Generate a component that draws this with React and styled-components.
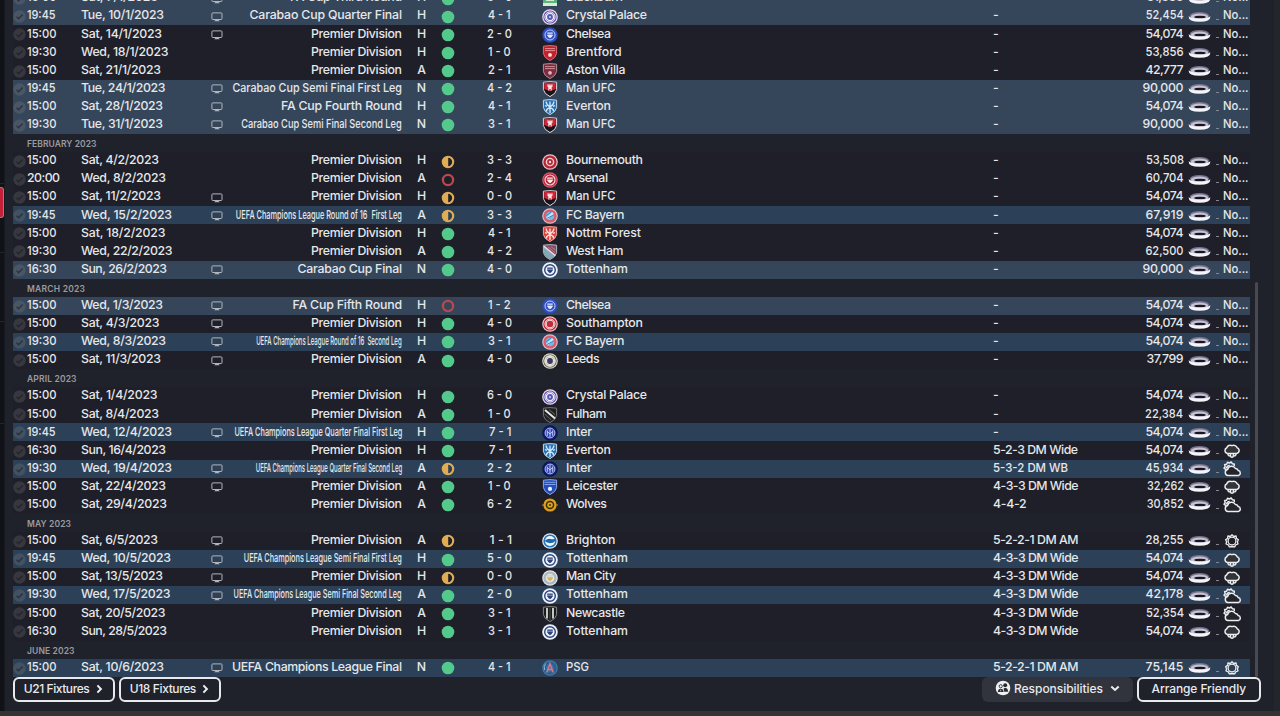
import React, { useLayoutEffect, useRef } from "react";
import styled, { createGlobalStyle } from "styled-components";

const GlobalStyle = createGlobalStyle`
  * {
    box-sizing: border-box;
  }
  body {
    margin: 0;
    overflow: hidden;
    background: #1f212b;
    font-family: Inter, "Liberation Sans", sans-serif;
  }
`;

// competition name -> text and width it has to fit in
const comps = {
  pl: ["Premier Division", 91],
  fa3: ["FA Cup Third Round", 112],
  fa4: ["FA Cup Fourth Round", 121],
  fa5: ["FA Cup Fifth Round", 109.5],
  ccq: ["Carabao Cup Quarter Final", 152.5],
  ccs1: ["Carabao Cup Semi Final First Leg", 169.5],
  ccs2: ["Carabao Cup Semi Final Second Leg", 160.5],
  ccf: ["Carabao Cup Final", 104.5],
  cl16a: ["UEFA Champions League Round of 16  First Leg", 166],
  cl16b: ["UEFA Champions League Round of 16  Second Leg", 145.5],
  clqa: ["UEFA Champions League Quarter Final First Leg", 168],
  clqb: ["UEFA Champions League Quarter Final Second Leg", 146.5],
  clsa: ["UEFA Champions League Semi Final First Leg", 158],
  clsb: ["UEFA Champions League Semi Final Second Leg", 168],
  clf: ["UEFA Champions League Final", 170],
};

const nameWidths = {
  Blackburn: 57,
  "Crystal Palace": 81,
  Chelsea: 45,
  Brentford: 55.5,
  "Aston Villa": 59.5,
  "Man UFC": 49.5,
  Everton: 45,
  Bournemouth: 77,
  Arsenal: 42,
  "FC Bayern": 58.5,
  "Nottm Forest": 75,
  "West Ham": 57.5,
  Tottenham: 62,
  Southampton: 77,
  Leeds: 33.5,
  Fulham: 40.5,
  Inter: 26,
  Leicester: 52,
  Wolves: 41,
  Brighton: 49.5,
  "Man City": 50,
  Newcastle: 59,
  PSG: 23,
};

// time, date, date width, tv, competition, venue, result, score, club, attendance, tactic, weather
const months = [
  {
    rows: [
      ["15:00", "Sat, 7/1/2023", 77, 1, "fa3", "H", "w", "3 - 0", "Blackburn", "31,363"],
      ["19:45", "Tue, 10/1/2023", 83, 1, "ccq", "H", "w", "4 - 1", "Crystal Palace", "52,454"],
      ["15:00", "Sat, 14/1/2023", 81, 1, "pl", "H", "w", "2 - 0", "Chelsea", "54,074"],
      ["19:30", "Wed, 18/1/2023", 87.5, 0, "pl", "H", "w", "1 - 0", "Brentford", "53,856"],
      ["15:00", "Sat, 21/1/2023", 80, 0, "pl", "A", "w", "2 - 1", "Aston Villa", "42,777"],
      ["19:45", "Tue, 24/1/2023", 84.5, 1, "ccs1", "N", "w", "4 - 2", "Man UFC", "90,000"],
      ["15:00", "Sat, 28/1/2023", 82, 1, "fa4", "H", "w", "4 - 1", "Everton", "54,074"],
      ["19:30", "Tue, 31/1/2023", 82, 1, "ccs2", "N", "w", "3 - 1", "Man UFC", "90,000"],
    ],
  },
  {
    title: "FEBRUARY 2023",
    width: 69.5,
    rows: [
      ["15:00", "Sat, 4/2/2023", 78, 0, "pl", "H", "d", "3 - 3", "Bournemouth", "53,508"],
      ["20:00", "Wed, 8/2/2023", 85, 0, "pl", "A", "l", "2 - 4", "Arsenal", "60,704"],
      ["15:00", "Sat, 11/2/2023", 80, 1, "pl", "H", "d", "0 - 0", "Man UFC", "54,074"],
      ["19:45", "Wed, 15/2/2023", 91, 1, "cl16a", "A", "d", "3 - 3", "FC Bayern", "67,919"],
      ["15:00", "Sat, 18/2/2023", 84.5, 0, "pl", "H", "w", "4 - 1", "Nottm Forest", "54,074"],
      ["19:30", "Wed, 22/2/2023", 91.5, 0, "pl", "A", "w", "4 - 2", "West Ham", "62,500"],
      ["16:30", "Sun, 26/2/2023", 86, 1, "ccf", "N", "w", "4 - 0", "Tottenham", "90,000"],
    ],
  },
  {
    title: "MARCH 2023",
    width: 58,
    rows: [
      ["15:00", "Wed, 1/3/2023", 82, 1, "fa5", "H", "l", "1 - 2", "Chelsea", "54,074"],
      ["15:00", "Sat, 4/3/2023", 78.5, 1, "pl", "H", "w", "4 - 0", "Southampton", "54,074"],
      ["19:30", "Wed, 8/3/2023", 85, 1, "cl16b", "H", "w", "3 - 1", "FC Bayern", "54,074"],
      ["15:00", "Sat, 11/3/2023", 80, 1, "pl", "A", "w", "4 - 0", "Leeds", "37,799"],
    ],
  },
  {
    title: "APRIL 2023",
    width: 49.5,
    rows: [
      ["15:00", "Sat, 1/4/2023", 76.5, 0, "pl", "H", "w", "6 - 0", "Crystal Palace", "54,074"],
      ["15:00", "Sat, 8/4/2023", 78, 0, "pl", "A", "w", "1 - 0", "Fulham", "22,384"],
      ["19:45", "Wed, 12/4/2023", 91, 1, "clqa", "H", "w", "7 - 1", "Inter", "54,074"],
      ["16:30", "Sun, 16/4/2023", 85, 0, "pl", "H", "w", "7 - 1", "Everton", "54,074", "5-2-3 DM Wide", "rain"],
      ["19:30", "Wed, 19/4/2023", 91, 1, "clqb", "A", "d", "2 - 2", "Inter", "45,934", "5-3-2 DM WB", "cloud"],
      ["15:00", "Sat, 22/4/2023", 85, 1, "pl", "A", "w", "1 - 0", "Leicester", "32,262", "4-3-3 DM Wide", "rain"],
      ["15:00", "Sat, 29/4/2023", 86, 0, "pl", "A", "w", "6 - 2", "Wolves", "30,852", "4-4-2", "cloud"],
    ],
  },
  {
    title: "MAY 2023",
    width: 44,
    rows: [
      ["15:00", "Sat, 6/5/2023", 77, 1, "pl", "A", "d", "1 - 1", "Brighton", "28,255", "5-2-2-1 DM AM", "sun"],
      ["19:45", "Wed, 10/5/2023", 90, 1, "clsa", "H", "w", "5 - 0", "Tottenham", "54,074", "4-3-3 DM Wide", "rain"],
      ["15:00", "Sat, 13/5/2023", 82, 1, "pl", "H", "d", "0 - 0", "Man City", "54,074", "4-3-3 DM Wide", "rain"],
      ["19:30", "Wed, 17/5/2023", 89.5, 1, "clsb", "A", "w", "2 - 0", "Tottenham", "42,178", "4-3-3 DM Wide", "cloud"],
      ["15:00", "Sat, 20/5/2023", 84.5, 0, "pl", "A", "w", "3 - 1", "Newcastle", "52,354", "4-3-3 DM Wide", "cloud"],
      ["16:30", "Sun, 28/5/2023", 86, 0, "pl", "H", "w", "3 - 1", "Tottenham", "54,074", "4-3-3 DM Wide", "rain"],
    ],
  },
  {
    title: "JUNE 2023",
    width: 47.5,
    rows: [
      ["15:00", "Sat, 10/6/2023", 83, 1, "clf", "N", "w", "4 - 1", "PSG", "75,145", "5-2-2-1 DM AM", "sun"],
    ],
  },
];

const tacticWidths = {
  "5-2-3 DM Wide": 85,
  "5-3-2 DM WB": 75,
  "4-3-3 DM Wide": 85.5,
  "4-4-2": 33.5,
  "5-2-2-1 DM AM": 85.5,
};

// Tracks text in or out to reach its width, condenses it when it is far too long
function Fit({ width, right, children }) {
  const ref = useRef(null);
  useLayoutEffect(() => {
    const el = ref.current;
    el.style.letterSpacing = "0px";
    el.style.transform = "none";
    const natural = el.getBoundingClientRect().width;
    if (width / natural < 0.93) {
      el.style.transform = `scaleX(${width / natural})`;
    } else {
      const space = (width - natural) / (children.length - 1);
      el.style.letterSpacing = `${space}px`;
      el.style.marginRight = `${-space}px`;
    }
  }, [width, children]);
  return (
    <FitText ref={ref} $right={right}>
      {children}
    </FitText>
  );
}

function Check() {
  return (
    <svg width="13" height="13" viewBox="0 0 13 13">
      <circle cx="6.5" cy="6.5" r="6.2" fill="#8b8b8b" fillOpacity="0.24" />
      <path d="M3.6 6.8l2 1.9 4-4.2" fill="none" stroke="#14161d" strokeOpacity="0.55" strokeWidth="1.4" />
    </svg>
  );
}

function Tv() {
  return (
    <svg width="12" height="10" viewBox="0 0 12 10">
      <rect x="0.9" y="0.9" width="10.1" height="6.6" rx="0.8" fill="none" stroke="#b2b5ba" strokeWidth="1" />
      <path d="M3.2 9.3L4.4 8h3.2l1.2 1.3z" fill="#b2b5ba" />
    </svg>
  );
}

function Result({ type }) {
  return (
    <svg width="14" height="14" viewBox="0 0 14 14">
      {type === "w" && <circle cx="7" cy="7" r="6.3" fill="#53ca8c" />}
      {type === "d" && (
        <>
          <circle cx="7" cy="7" r="5.2" fill="none" stroke="#e0ad55" strokeWidth="2.1" />
          <path d="M7.2 1.8a5.2 5.2 0 0 0 0 10.4z" fill="#e0ad55" />
        </>
      )}
      {type === "l" && <circle cx="7" cy="7" r="5.1" fill="none" stroke="#b9484f" strokeWidth="2.3" />}
    </svg>
  );
}

const shield = "M1.4 1.2Q8 0 14.6 1.2V8.6Q14 12.8 8 15.6 2 12.8 1.4 8.6z";

function Round({ edge, ring, core, children }) {
  return (
    <>
      <circle cx="8" cy="8" r="7.8" fill={edge} />
      <circle cx="8" cy="8" r="6.6" fill={ring} />
      <circle cx="8" cy="8" r="4.3" fill={core} />
      {children}
    </>
  );
}

function Shield({ edge, fill, children }) {
  return (
    <>
      <path d={shield} fill={fill} stroke={edge} strokeWidth="1" />
      {children}
    </>
  );
}

const star = "M8 2.5v11.5M4 2.500Q4.500 6 8 8q3.500-2 4-5.500M4 12.500Q5 9.500 8 8q3 1.500 4 4.500M3 6.500l2 .8M13 6.500l-2 .8";
const badge = "M5.3 5.6h5.4v2.6q-.7 2.2-2.7 3.1-2-.9-2.7-3.1z";

const crests = {
  Blackburn: (
    <>
      <path d="M1 2h14v13H1z" fill="#57b77b" />
      <path d="M1 12h14v3H1zM4 4h8v6H4z" fill="#d9ead9" />
    </>
  ),
  "Crystal Palace": (
    <Round edge="#eddcec" ring="#6352ae" core="#eeeefa">
      <circle cx="8" cy="8" r="5.1" fill="none" stroke="#eceaf8" strokeWidth="1" />
      <circle cx="8" cy="8" r="2.9" fill="#5559b3" />
      <circle cx="8" cy="8" r="1" fill="#d5d7f2" />
    </Round>
  ),
  Chelsea: (
    <Round edge="#2d49b8" ring="#3554c7" core="#3452ba">
      <circle cx="8" cy="8" r="5" fill="none" stroke="#b8c8ff" strokeWidth="1" />
      <path d={badge} fill="#e2eaff" />
      <path d="M5 7.200h6" stroke="#3452ba" strokeWidth="0.800" />
    </Round>
  ),
  Brentford: (
    <Shield edge="#e26c73" fill="#c3202d">
      <path d="M3 3.6h10M3 5.6h10" stroke="#efa4a8" strokeWidth="0.8" />
      <circle cx="8" cy="9.9" r="1.9" fill="#ffe6e4" />
    </Shield>
  ),
  "Aston Villa": (
    <Shield edge="#b09097" fill="#7d2b42">
      <path d="M3 3.6h10M3 5.6h10" stroke="#cf8c92" strokeWidth="1" />
      <circle cx="8" cy="9.8" r="1.9" fill="#ddb7b9" />
    </Shield>
  ),
  "Man UFC": (
    <Shield edge="#e2d8da" fill="#17131a">
      <path d="M2.2 2q5.8-1 11.6 0v6L8 10.2 2.2 8z" fill="#d02438" />
      <path d="M5.5 3.200h1.100v1h.9v-1h1v1h.9v-1h1.100v2.500l-.8.600v3.200H8.700V8H7.300v1.500H6.300V6.300l-.8-.6z" fill="#f1e7e3" />
    </Shield>
  ),
  Everton: (
    <Shield edge="#b9daf5" fill="#2b70ad">
      <path d={star} fill="none" stroke="#d4ecff" strokeWidth="1.3" />
    </Shield>
  ),
  Bournemouth: (
    <Round edge="#e9c6c8" ring="#b52536" core="#ecd2d0">
      <circle cx="8" cy="8" r="2.9" fill="#b5263a" />
      <circle cx="8" cy="8" r="1.2" fill="#f2dfdc" />
    </Round>
  ),
  Arsenal: (
    <Round edge="#d85b6b" ring="#b81f37" core="#b8263b">
      <circle cx="8" cy="8" r="5" fill="none" stroke="#f2d4d6" strokeWidth="1.200" />
      <path d={badge} fill="#fbeceb" />
      <path d="M5.500 7.200h5" stroke="#b8263b" strokeWidth="0.800" />
    </Round>
  ),
  "FC Bayern": (
    <Round edge="#e4b9c3" ring="#d85b6c" core="#78b8e5">
      <path d="M4.2 9.8L10 4l1.7 1.5-5.8 6z" fill="#cbe4f4" />
      <path d="M5 10.4l6.6-3.3M4.2 7.7L9.3 4" stroke="#3387cc" strokeWidth="1" />
    </Round>
  ),
  "Nottm Forest": (
    <Shield edge="#f2a6a0" fill="#d9433f">
      <path d={star} fill="none" stroke="#ffe5de" strokeWidth="1.3" />
    </Shield>
  ),
  "West Ham": (
    <Shield edge="#a9b9c2" fill="#8c4961">
      <path d="M2 3l10.8 9.4L8 15.1Q2.4 12.3 2 8.6z" fill="#7fa9b6" />
      <path d="M2 2.4l11.2 9.2" stroke="#e4dfe5" strokeWidth="1.5" />
      <path d="M6 3l7 5.500M9 2.800l4.500 3.200" stroke="#b98a9b" strokeWidth="0.800" />
    </Shield>
  ),
  Tottenham: (
    <Round edge="#e9effb" ring="#f2f5ff" core="#f2f5ff">
      <circle cx="8" cy="8" r="5.300" fill="none" stroke="#2c437b" strokeWidth="1.400" />
      <path d={badge} fill="#2c437b" />
      <path d="M5.6 7.2h4.8" stroke="#e7eefc" strokeWidth="0.6" />
    </Round>
  ),
  Southampton: (
    <Round edge="#f0c5c5" ring="#c4283a" core="#f5e7e2">
      <circle cx="8" cy="8" r="5" fill="none" stroke="#f5e7e2" strokeWidth="1" />
      <circle cx="8" cy="8" r="3.300" fill="#c22d3e" />
    </Round>
  ),
  Leeds: (
    <Round edge="#d9d7c4" ring="#4b4954" core="#e4e1cc">
      <circle cx="8" cy="8" r="5" fill="none" stroke="#e4e1cc" strokeWidth="1.8" />
      <circle cx="8" cy="8" r="2.900" fill="#3c396b" />
    </Round>
  ),
  Fulham: (
    <Shield edge="#77777a" fill="#202023">
      <path d="M3 3l10 8.5" stroke="#e5e5e4" strokeWidth="2" />
      <path d="M7 2.6l6 5M2.6 7l6.6 6" stroke="#7a7a7b" strokeWidth="0.8" />
    </Shield>
  ),
  Inter: (
    <Round edge="#0c1551" ring="#101e71" core="#3146b0">
      <circle cx="8" cy="8" r="4.9" fill="none" stroke="#bcc8ff" strokeWidth="1" />
      <path d="M5.3 10.8V5.6M10.7 10.8V5.6M8 4v8M5.4 6.6L8 9l2.6-2.4" fill="none" stroke="#ccd6ff" strokeWidth="0.9" />
    </Round>
  ),
  Leicester: (
    <Shield edge="#87a8ed" fill="#254ebc">
      <path d="M2.5 3.3h11M2.5 5.5h11" stroke="#98b5f7" strokeWidth="0.8" />
      <circle cx="8" cy="9.9" r="2.1" fill="#eaf1ff" />
    </Shield>
  ),
  Wolves: (
    <Round edge="#2a2014" ring="#dca01f" core="#3c2b10">
      <path d="M0 8h2M14 8h2" stroke="#c38a1c" strokeWidth="1.2" />
      <circle cx="8" cy="8" r="2.8" fill="#e0a51e" />
      <circle cx="8" cy="8" r="1.1" fill="#4a3512" />
    </Round>
  ),
  Brighton: (
    <Round edge="#d9edfa" ring="#2b76b9" core="#f0f7fb">
      <circle cx="8" cy="8" r="5" fill="#f0f7fb" />
      <path d="M2.500 8q3.500-3.200 7.500-1.700L13.500 6q-.4 4-4.500 4.100Q5.500 10.500 2.500 8z" fill="#1d68ac" />
    </Round>
  ),
  "Man City": (
    <Round edge="#e1e5e6" ring="#a8b8c6" core="#ebe6cf">
      <path d={badge} fill="#d8b457" />
      <path d="M5.2 5.300h5.600v2H5.200z" fill="#d3dbe0" />
    </Round>
  ),
  Newcastle: (
    <Shield edge="#8a8a89" fill="#191a1c">
      <path d="M5 2v10.500M11 2v10.500" stroke="#e4e3dd" strokeWidth="1.700" />
      <path d="M8 2v12" stroke="#77777a" strokeWidth="0.600" />
    </Shield>
  ),
  PSG: (
    <Round edge="#3d7da6" ring="#2b5e94" core="#386fa0">
      <path d="M4.800 12.500L8 3.600l3.200 8.900M6 9.600h4" fill="none" stroke="#dd7684" strokeWidth="1.500" />
      <path d="M3.500 3.600Q1.600 6.500 2.600 10" fill="none" stroke="#8dc0da" strokeWidth="0.900" />
    </Round>
  ),
};

function Stadium() {
  return (
    <svg width="23" height="12" viewBox="0 0 23 12">
      <ellipse cx="11.500" cy="4.500" rx="9.600" ry="3.600" fill="#777389" />
      <ellipse cx="11.500" cy="5.500" rx="8.800" ry="3" fill="#c6c1d6" />
      <ellipse cx="12" cy="6" rx="5.800" ry="1.300" fill="#17171d" />
      <path d="M.6 5.200Q3.500 7.500 11.500 7.500t10.900-2.300Q22.600 10.800 11.500 10.800T.6 5.200z" fill="#f5f4fb" />
    </svg>
  );
}

const cloud = "M4.300 10.500a3 3 0 0 1-.5-5.700A3.500 3.500 0 0 1 9 2.700a3.700 3.700 0 0 1 5.200 2.200 2.900 2.900 0 0 1-.5 5.600z";

function Weather({ type }) {
  return (
    <svg width="19" height="16" viewBox="0 0 19 16">
      {type === "rain" && (
        <g stroke="#ecedee" strokeWidth="1.500" strokeLinejoin="round">
          <path d={cloud} fill="#33343a" />
          <path d="M5 10.500v1q.2 1.400 1.300 1.400t1.200-1.400v1.400q.2 1.400 1.500 1.400t1.400-1.400v-1.400q.2 1.400 1.300 1.400t1.200-1.400v-1" fill="none" />
        </g>
      )}
      {type === "cloud" && (
        <g stroke="#ecedee" strokeWidth="1.500" strokeLinejoin="round">
          <path d="M2.600 10.200l.1-1.800L1 7.200l1.200-1.500L1.600 3.600l2-.4L4.500 1.300l1.900.7 1.800-1 1.100 1.700 1.900.3.100 2" fill="none" />
          <path d="M3.600 7.500q.2-3 3.200-3" fill="none" />
          <path d="M5 14.500a3 3 0 0 1-.4-5.900 4.200 4.200 0 0 1 7.800-1.100 2.800 2.800 0 0 1 2.800 2.100 2.500 2.500 0 0 1 .2 4.900z" fill="#24252c" />
        </g>
      )}
      {type === "sun" && (
        <g fill="none" stroke="#ecedee" strokeLinejoin="round">
          <circle cx="9" cy="8" r="3.900" strokeWidth="1.300" />
          <path
            d="M9 1.700l1.700 1.700 2.400-.4.300 2.400 2 1.300-1 2.100.6 2.200-2.300.8-1 2.100L9 13.500l-2.700.4-1-2.100-2.300-.8.600-2.200-1-2.100 2-1.300.3-2.400 2.400.4z"
            strokeWidth="1.300"
          />
        </g>
      )}
    </svg>
  );
}

function Fixture({ data }) {
  const [time, date, dateWidth, tv, comp, venue, result, score, club, crowd, tactic, weather] = data;
  const [compName, compWidth] = comps[comp];
  let tint = "none";
  if (comp !== "pl") tint = comp.startsWith("cl") ? "europe" : "cup";
  return (
    <Row $tint={tint}>
      <Cell $drop>
        <Check />
      </Cell>
      <Cell>
        <Fit width={time === "20:00" ? 33 : time === "19:45" ? 28.5 : 29.5}>{time}</Fit>
      </Cell>
      <Cell>
        <Fit width={dateWidth}>{date}</Fit>
      </Cell>
      <Cell $align="center" $drop>
        {tv ? <Tv /> : null}
      </Cell>
      <Cell $align="flex-end">
        <Fit width={compWidth} right>
          {compName}
        </Fit>
      </Cell>
      <Cell $align="center">{venue}</Cell>
      <Cell $align="center" $drop>
        <Result type={result} />
      </Cell>
      <Score>
        <Fit width={score.includes("1") ? 22.5 : 25}>{score}</Fit>
      </Score>
      <Cell $align="center" $drop>
        <svg width="16" height="16" viewBox="0 0 16 16">
          {crests[club]}
        </svg>
      </Cell>
      <Club>
        <Fit width={nameWidths[club]}>{club}</Fit>
      </Club>
      <Cell>{tactic ? <Fit width={tacticWidths[tactic]}>{tactic}</Fit> : "-"}</Cell>
      <Cell $align="flex-end">
        <Fit width={crowd === "90,000" ? 41 : crowd.startsWith("3") ? 37 : 38} right>
          {crowd}
        </Fit>
      </Cell>
      <Cell $align="center" $drop>
        <Stadium />
      </Cell>
      <Dash />
      <Cell $drop={Boolean(weather)}>{weather ? <Weather type={weather} /> : <Fit width={25.5}>No...</Fit>}</Cell>
    </Row>
  );
}

function App() {
  return (
    <>
      <GlobalStyle />
      <Screen>
        <Edge>
          <EdgeLine $top={183} />
          <Marker />
          <EdgeLine $top={34} />
          <EdgeLine $top={68} />
          <EdgeLine $top={101} />
        </Edge>
        <Panel>
          <Viewport>
            <List>
              {months.map((month, i) => (
                <React.Fragment key={i}>
                  {month.title && (
                    <Month>
                      <Fit width={month.width}>{month.title}</Fit>
                    </Month>
                  )}
                  {month.rows.map((row) => (
                    <Fixture key={row[1]} data={row} />
                  ))}
                </React.Fragment>
              ))}
            </List>
            <Scrollbar />
          </Viewport>
          <Footer>
            <Button $width={102.5}>
              <Fit width={66}>U21 Fixtures</Fit>
              <Chevron />
            </Button>
            <Button $width={102.5}>
              <Fit width={66.5}>U18 Fixtures</Fit>
              <Chevron />
            </Button>
            <Spacer />
            <Responsibilities>
              <People />
              <Fit width={89}>Responsibilities</Fit>
              <Chevron down />
            </Responsibilities>
            <Button $width={124}>
              <Fit width={94.5}>Arrange Friendly</Fit>
            </Button>
          </Footer>
        </Panel>
        <RightEdge />
      </Screen>
      <BottomStrip />
    </>
  );
}

function Chevron({ down }) {
  return (
    <svg width="10" height="10" viewBox="0 0 10 10">
      <path
        d={down ? "M1.300 3.500L5 6.900l3.700-3.400" : "M3.400 1.400L6.900 5 3.400 8.600"}
        fill="none"
        stroke="#eeeeef"
        strokeWidth="2"
      />
    </svg>
  );
}

function People() {
  return (
    <svg width="16" height="16" viewBox="0 0 16 16">
      <circle cx="8" cy="8" r="7.300" fill="#f1f1f2" />
      <circle cx="10.200" cy="5.300" r="2" fill="#292b33" />
      <path d="M8.600 8.200q3.200-.8 4 1.200l.7 2.300H9.200z" fill="#292b33" />
      <circle cx="5.700" cy="6.200" r="1.600" fill="none" stroke="#292b33" strokeWidth="0.900" />
      <path d="M2.900 11.900q.2-3.100 2.800-3.100t2.900 3.100z" fill="#292b33" />
      <path d="M5.700 9.700v1.600" stroke="#fff" strokeWidth="0.700" />
    </svg>
  );
}

const Screen = styled.div`
  display: flex;
  width: 1280px;
  height: 711px;
  overflow: hidden;
`;

const Edge = styled.div`
  width: 5px;
  background: #111218;
  border-right: 1px solid #181a22;
`;

const EdgeLine = styled.div`
  height: 1px;
  margin-top: ${(props) => props.$top}px;
  background: #25262c;
`;

const Marker = styled.div`
  height: 31px;
  margin-top: 3px;
  background: #c81f38;
  border: 1px solid #8f8388;
  border-left: none;
  border-radius: 0 3px 3px 0;
`;

const Panel = styled.main`
  flex: 1;
  display: flex;
  flex-direction: column;
  padding-left: 7.5px;
  background: #1f212b;
`;

const Viewport = styled.div`
  display: flex;
  align-items: flex-end;
  height: 676.7px;
  overflow: hidden;
`;

const List = styled.div`
  width: 1237.5px;
  flex-shrink: 0;
`;

const Scrollbar = styled.div`
  width: 3px;
  height: 395px;
  margin-left: 5px;
  border-radius: 2px;
  background: #494a51;
`;

const Month = styled.div`
  display: flex;
  align-items: center;
  height: 18.1px;
  padding: 2px 0 0 14.5px;
  background: #20222b;
  color: #9a9ba0;
  font-size: 8.5px;
  font-weight: 600;
`;

const tints = {
  none: "#1e1f28",
  cup: "#35465a",
  europe: "#2c4157",
};

const Row = styled.div`
  display: grid;
  grid-template-columns: 14.5px 54px 128.5px 15px 177.5px 39px 14px 88px 14px 436px 127px 63.5px 32.5px 7px 27px;
  height: 18.1px;
  background: ${(props) => tints[props.$tint]};
  color: #e6e7ea;
  font-size: 12.3px;
  font-weight: 450;
  line-height: 16px;
`;

const Cell = styled.div`
  display: flex;
  align-items: center;
  justify-content: ${(props) => props.$align || "flex-start"};
  min-width: 0;
  padding: ${(props) => (props.$drop ? "1px 0 0" : "0 0 1.6px")};
  white-space: pre;

  svg {
    flex-shrink: 0;
  }
`;

const Club = styled(Cell)`
  padding-left: 9px;
`;

const Score = styled(Cell)`
  justify-content: center;
  padding-left: 3.5px;
`;

const Dash = styled.div`
  width: 3px;
  height: 1px;
  margin-top: 12px;
  background: #858891;
`;

const FitText = styled.span`
  display: inline-block;
  white-space: pre;
  transform-origin: ${(props) => (props.$right ? "right" : "left")} center;
`;

const Footer = styled.footer`
  display: flex;
  align-items: flex-start;
  gap: 3.8px;
  padding-right: 13.2px;
`;

const Button = styled.button`
  display: flex;
  align-items: center;
  justify-content: center;
  gap: 4px;
  width: ${(props) => props.$width}px;
  height: 25.5px;
  padding: 0 0 1px;
  border: 2px solid #e9e9eb;
  border-radius: 6px;
  background: transparent;
  color: #e9e9eb;
  font-family: inherit;
  font-size: 12px;
  font-weight: 450;
`;

const Responsibilities = styled(Button)`
  width: 151px;
  padding-bottom: 2px;
  border: none;
  background: #32343d;
  gap: 3px;

  svg:last-child {
    margin-left: 4px;
  }
`;

const Spacer = styled.div`
  flex: 1;
`;

const RightEdge = styled.div`
  width: 6px;
  background: #24262e;
`;

const BottomStrip = styled.div`
  height: 5px;
  background: #353332;
`;

export default App;
